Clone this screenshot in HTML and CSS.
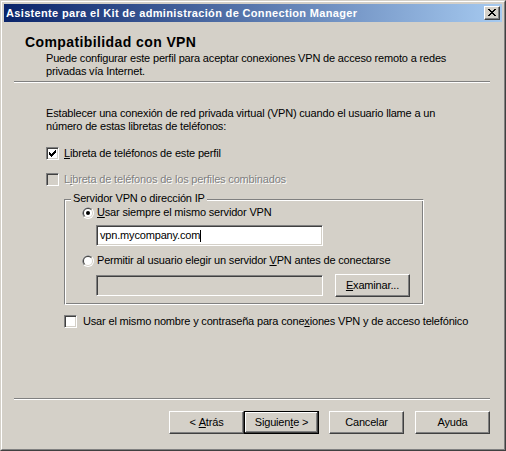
FILE: index.html
```html
<!DOCTYPE html>
<html lang="es">
<head>
<meta charset="utf-8">
<title>Asistente</title>
<link rel="stylesheet" href="styles.css">
</head>
<body>
<div class="window">
  <div class="frame">
    <div class="caption">
      <span class="caption-title">Asistente para el Kit de administración de Connection Manager</span>
      <span class="close"><svg width="8" height="7" viewBox="0 0 8 7" shape-rendering="crispEdges"><path d="M0 0h2v1H0z M6 0h2v1H6z M1 1h2v1H1z M5 1h2v1H5z M2 2h4v1H2z M3 3h2v1H3z M2 4h4v1H2z M1 5h2v1H1z M5 5h2v1H5z M0 6h2v1H0z M6 6h2v1H6z" fill="#000"/></svg></span>
    </div>
    <div class="body">
      <div class="header">
        <div class="title">Compatibilidad con VPN</div>
        <div class="subtitle">Puede configurar este perfil para aceptar conexiones VPN de acceso remoto a redes<br>privadas vía Internet.</div>
      </div>
      <div class="sep sep-top"></div>
      <div class="content">
        <div class="intro">Establecer una conexión de red privada virtual (VPN) cuando el usuario llame a un<br>número de estas libretas de teléfonos:</div>
        <div class="row check-row first">
          <span class="check"><svg width="7" height="7" viewBox="0 0 7 7" shape-rendering="crispEdges"><path d="M0 2h1v3H0z M1 3h1v3H1z M2 4h1v3H2z M3 3h1v3H3z M4 2h1v3H4z M5 1h1v3H5z M6 0h1v3H6z" fill="#000"/></svg></span>
          <span class="label"><u>L</u>ibreta de teléfonos de este perfil</span>
        </div>
        <div class="row check-row second">
          <span class="check disabled"></span>
          <span class="label dim">L<u>i</u>breta de teléfonos de los perfiles combinados</span>
        </div>
        <div class="group">
          <span class="legend">Servidor VPN o dirección IP</span>
          <div class="row radio-row">
            <svg class="radio" width="12" height="12" viewBox="0 0 12 12"><circle cx="6" cy="6" r="6" fill="#fff"/><path d="M1.76 10.24A6 6 0 0 1 10.24 1.76Z" fill="#808080"/><circle cx="6" cy="6" r="5" fill="#d4d0c8"/><path d="M2.46 9.54A5 5 0 0 1 9.54 2.46Z" fill="#404040"/><circle cx="6" cy="6" r="4" fill="#fff"/><circle cx="6" cy="6" r="2" fill="#000"/></svg>
            <span class="label"><u>U</u>sar siempre el mismo servidor VPN</span>
          </div>
          <div class="field field-one"><span>vpn.mycompany.com</span><span class="caret"></span></div>
          <div class="row radio-row radio-two">
            <svg class="radio" width="12" height="12" viewBox="0 0 12 12"><circle cx="6" cy="6" r="6" fill="#fff"/><path d="M1.76 10.24A6 6 0 0 1 10.24 1.76Z" fill="#808080"/><circle cx="6" cy="6" r="5" fill="#d4d0c8"/><path d="M2.46 9.54A5 5 0 0 1 9.54 2.46Z" fill="#404040"/><circle cx="6" cy="6" r="4" fill="#fff"/></svg>
            <span class="label">Permitir al usuario elegir un servidor <u>V</u>PN antes de conectarse</span>
          </div>
          <div class="browse-row">
            <div class="field field-two"></div>
            <span class="btn browse"><u>E</u>xaminar...</span>
          </div>
        </div>
        <div class="row check-row third">
          <span class="check"></span>
          <span class="label">Usar el mismo nombre y contraseña para cone<u>x</u>iones VPN y de acceso telefónico</span>
        </div>
      </div>
      <div class="footer">
        <div class="sep"></div>
        <div class="buttons">
          <span class="btn">&lt;&nbsp;<u>A</u>trás</span>
          <span class="btn default">Siguien<u>t</u>e &gt;</span>
          <span class="btn cancel">Cancelar</span>
          <span class="btn help">Ayuda</span>
        </div>
      </div>
    </div>
  </div>
</div>
</body>
</html>
```
FILE: styles.css
```css
* { box-sizing: border-box; }
html, body { margin: 0; padding: 0; }
body {
  width: 506px;
  height: 451px;
  background: #d4d0c8;
  font-family: "Liberation Sans", Arial, sans-serif;
  font-size: 11px;
  line-height: 13px;
  letter-spacing: -0.17px;
  color: #000;
  overflow: hidden;
}
u { text-decoration: underline; text-underline-offset: 1px; }

.window {
  width: 506px;
  height: 451px;
  border: 1px solid;
  border-color: #d4d0c8 #404040 #404040 #d4d0c8;
}
.frame {
  height: 100%;
  border: 1px solid;
  border-color: #fff #808080 #808080 #fff;
  padding: 2px;
  display: flex;
  flex-direction: column;
  background: #d4d0c8;
}
.caption {
  flex: none;
  height: 18px;
  display: flex;
  align-items: center;
  padding-left: 2px;
  background: linear-gradient(to right, #0a246a, #a6caf0);
  color: #fff;
  font-weight: bold;
  font-size: 11px;
  letter-spacing: 0.34px;
}
.caption-title { flex: 1; white-space: nowrap; }
.close {
  width: 16px;
  height: 14px;
  margin-right: 2px;
  display: flex;
  align-items: center;
  justify-content: center;
  background: #d4d0c8;
  border: 1px solid;
  border-color: #fff #404040 #404040 #fff;
  box-shadow: inset -1px -1px #808080;
  padding-bottom: 1px;
}
.close svg { display: block; }

.body { flex: 1; display: flex; flex-direction: column; }
.header { padding: 12px 0 0 21px; }
.title { font-size: 14px; font-weight: bold; line-height: 16px; letter-spacing: 0.4px; }
.subtitle { margin-top: 2px; padding-left: 21px; white-space: nowrap; }

.sep {
  height: 2px;
  margin: 0 12px 0 10px;
  border-top: 1px solid #808080;
  border-bottom: 1px solid #fff;
}
.sep-top { margin-top: 3px; }

.content { padding-left: 42px; }
.intro { margin-top: 24px; white-space: nowrap; }

.row { display: flex; align-items: center; height: 13px; white-space: nowrap; }
.check-row .label { margin-left: 5px; }
.first { margin-top: 14px; }
.second { margin-top: 13px; }
.third { margin-top: 10px; margin-left: 18px; }
.third .label { margin-left: 6px; }

.check {
  flex: none;
  width: 13px;
  height: 13px;
  border: 1px solid;
  border-color: #808080 #fff #fff #808080;
  box-shadow: inset 1px 1px #404040, inset -1px -1px #d4d0c8;
  background: #fff;
  padding: 2px 0 0 2px;
}
.check svg { display: block; }
.check.disabled { background: #d4d0c8; }
.dim { color: #808080; text-shadow: 1px 1px 0 #fff; }

.group {
  position: relative;
  margin: 13px 0 0 18px;
  width: 360px;
  height: 106px;
  border: 1px solid;
  border-color: #808080 #fff #fff #808080;
  box-shadow: inset 1px 1px #fff, inset -1px -1px #808080;
  padding: 6px 0 0 17px;
}
.legend {
  position: absolute;
  top: -8px;
  left: 6px;
  padding: 0 2px;
  background: #d4d0c8;
  white-space: nowrap;
}
.radio { flex: none; display: block; }
.radio-row .label { margin-left: 3px; }
.radio-two { margin-top: 8px; }

.field {
  width: 227px;
  height: 21px;
  border: 1px solid;
  border-color: #808080 #fff #fff #808080;
  box-shadow: inset 1px 1px #404040, inset -1px -1px #d4d0c8;
  background: #fff;
  display: flex;
  align-items: center;
  padding-left: 3px;
}
.field-one { margin: 6px 0 0 14px; }
.caret { display: inline-block; width: 1px; height: 12px; background: #000; }
.browse-row { display: flex; align-items: flex-start; margin: 7px 0 0 14px; }
.field-two { margin-top: 1px; background: #d4d0c8; }
.browse { margin-left: 12px; }

.btn {
  flex: none;
  width: 75px;
  height: 23px;
  display: flex;
  align-items: center;
  justify-content: center;
  background: #d4d0c8;
  border: 1px solid;
  border-color: #fff #404040 #404040 #fff;
  box-shadow: inset -1px -1px #808080;
  white-space: nowrap;
}
.btn.default {
  border-color: #000;
  box-shadow: inset -1px -1px #404040, inset 1px 1px #fff, inset -2px -2px #808080;
}

.footer { margin-top: auto; }
.buttons {
  display: flex;
  justify-content: flex-end;
  margin-top: 11px;
  padding: 0 12px 13px 0;
}
.cancel { margin-left: 10px; }
.help { margin-left: 11px; }
```
